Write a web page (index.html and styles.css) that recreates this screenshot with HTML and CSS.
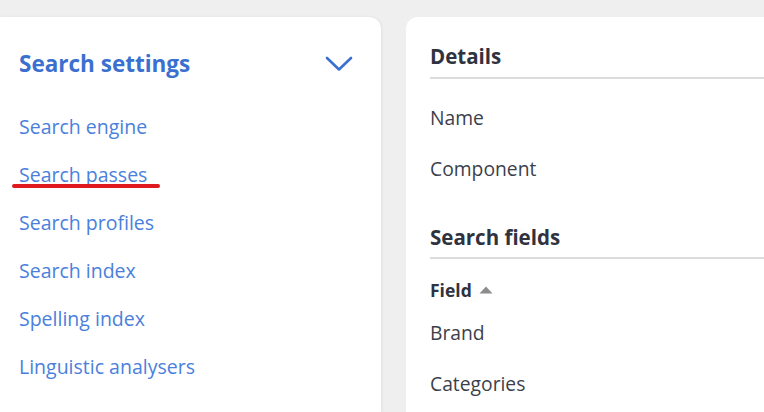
FILE: index.html
```html
<!DOCTYPE html>
<html lang="en">
<head>
    <meta charset="UTF-8">
    <meta name="viewport" content="width=device-width, initial-scale=1.0">
    <title>Search settings</title>
    <link rel="stylesheet" href="styles.css">
</head>
<body>
    <div class="page">
        <nav class="side-card">
            <div class="side-head">
                <h2>Search settings</h2>
                <svg class="chevron" width="28" height="16" viewBox="0 0 28 16">
                    <path d="M2 2 L14 13.5 L26 2" fill="none" stroke="#3a70d0" stroke-width="2.6" stroke-linecap="round" stroke-linejoin="round"/>
                </svg>
            </div>
            <ul class="side-links">
                <li><a href="#">Search engine</a></li>
                <li class="marked"><a href="#">Search passes</a></li>
                <li><a href="#">Search profiles</a></li>
                <li><a href="#">Search index</a></li>
                <li><a href="#">Spelling index</a></li>
                <li><a href="#">Linguistic analysers</a></li>
            </ul>
        </nav>

        <main class="main-card">
            <h3 class="section-title">Details</h3>
            <div class="row first">Name</div>
            <div class="row">Component</div>

            <h3 class="section-title second">Search fields</h3>
            <div class="col-head">Field
                <svg class="sort" width="14" height="8" viewBox="0 0 14 8"><path d="M7 0.5 L13.5 7.5 L0.5 7.5 Z" fill="#8c8c8c"/></svg>
            </div>
            <div class="row">Brand</div>
            <div class="row">Categories</div>
        </main>
    </div>
</body>
</html>
```

FILE: styles.css
```css
body {
    margin: 0;
    background: #efefef;
    font-family: "Open Sans", "Noto Sans", sans-serif;
    overflow: hidden;
}
.page {
    display: flex;
    gap: 25px;
    padding-top: 17px;
    height: 395px;
    margin-left: -12px;
}
.side-card {
    flex: none;
    width: 393px;
    background: #fff;
    border-radius: 12px 12px 0 0;
    box-shadow: 1px 0 3px rgba(0, 0, 0, 0.06);
    padding: 0 0 0 31px;
    box-sizing: border-box;
}
.side-head {
    display: flex;
    align-items: center;
    justify-content: space-between;
    height: 85px;
    padding: 7px 28px 0 0;
    box-sizing: border-box;
}
.side-head h2 {
    margin: 0;
    font-size: 22.5px;
    font-weight: 700;
    color: #3a70d0;
}
.chevron {
    display: block;
    margin-top: 1px;
}
.side-links {
    list-style: none;
    margin: 0;
    padding: 0;
}
.side-links li {
    height: 48px;
    display: flex;
    align-items: center;
}
.side-links a {
    color: #4a80dc;
    text-decoration: none;
    font-size: 19.5px;
}
.side-links .marked {
    position: relative;
}
.side-links .marked::after {
    content: "";
    position: absolute;
    left: -7px;
    top: 34px;
    width: 148px;
    height: 4px;
    border-radius: 2px;
    background: #e0191e;
}
.main-card {
    flex: none;
    width: 400px;
    background: #fff;
    border-radius: 12px 12px 0 0;
    padding: 0 0 0 24px;
    color: #3c3f4c;
}
.section-title {
    margin: 0;
    font-size: 20.5px;
    font-weight: 700;
    color: #2f3340;
    height: 62px;
    display: flex;
    align-items: center;
    padding-top: 18px;
    border-bottom: 2px solid #dcdcdc;
    box-sizing: border-box;
}
.section-title.second {
    height: 65px;
    padding-top: 23px;
}
.row {
    height: 51px;
    display: flex;
    align-items: center;
    font-size: 19.3px;
}
.row.first {
    margin-top: 13px;
}
.col-head {
    height: 48px;
    padding-top: 14px;
    box-sizing: border-box;
    display: flex;
    align-items: center;
    font-size: 17.5px;
    font-weight: 700;
    color: #2f3340;
    gap: 7px;
}
.sort {
    display: block;
}
```
